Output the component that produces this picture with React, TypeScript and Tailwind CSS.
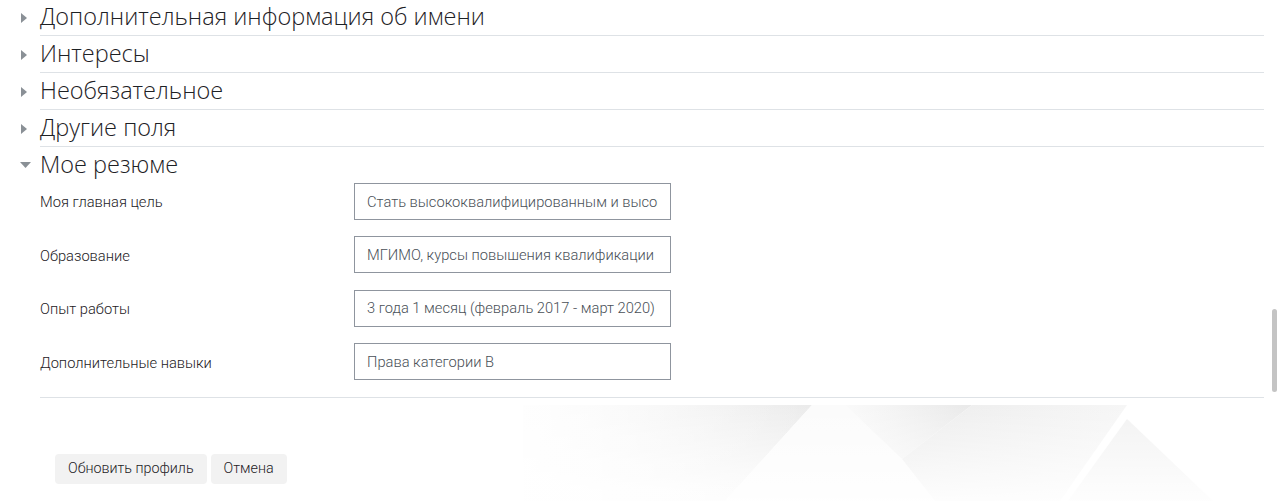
import React from 'react'

const sections = ['Дополнительная информация об имени', 'Интересы', 'Необязательное', 'Другие поля']

const fields = [
  { label: 'Моя главная цель', value: 'Стать высококвалифицированным и высокооплачиваемым специалистом' },
  { label: 'Образование', value: 'МГИМО, курсы повышения квалификации' },
  { label: 'Опыт работы', value: '3 года 1 месяц (февраль 2017 - март 2020)' },
  { label: 'Дополнительные навыки', value: 'Права категории B' },
]

const CaretRight = () => (
  <svg width="6" height="10" viewBox="0 0 6 10" className="block">
    <path d="M0 0 L6 5 L0 10 Z" fill="#8a9096" />
  </svg>
)

const CaretDown = () => (
  <svg width="11" height="6" viewBox="0 0 11 6" className="block">
    <path d="M0 0 L11 0 L5.5 6 Z" fill="#8a9096" />
  </svg>
)

// faint triangle pattern behind the bottom of the page
const Decoration = () => (
  <svg width="720" height="96" viewBox="0 0 720 96" className="block">
    <defs>
      <linearGradient id="gl" x1="0" y1="0" x2="1" y2="0">
        <stop offset="0" stopColor="#fcfcfc" />
        <stop offset="1" stopColor="#ebebeb" />
      </linearGradient>
      <linearGradient id="gv" x1="0" y1="0" x2="1" y2="0">
        <stop offset="0" stopColor="#fafafa" />
        <stop offset="1" stopColor="#e9e9e9" />
      </linearGradient>
      <linearGradient id="gb" x1="0" y1="0" x2="1" y2="0">
        <stop offset="0" stopColor="#ececec" />
        <stop offset="1" stopColor="#f6f6f6" />
      </linearGradient>
      <linearGradient id="fade" x1="0" y1="0" x2="0" y2="1">
        <stop offset="0" stopColor="#ffffff" stopOpacity="0" />
        <stop offset="1" stopColor="#ffffff" stopOpacity="0.9" />
      </linearGradient>
      <linearGradient id="fadeL" x1="0" y1="0" x2="1" y2="0">
        <stop offset="0" stopColor="#ffffff" stopOpacity="0.7" />
        <stop offset="0.4" stopColor="#ffffff" stopOpacity="0" />
      </linearGradient>
    </defs>
    <polygon points="3,0 292,0 205,96 3,96" fill="url(#gl)" />
    <polygon points="292,0 325,0 382,54 415,96 205,96" fill="#fbfbfb" />
    <polygon points="325,0 452,0 382,54" fill="url(#gv)" />
    <polygon points="452,0 607,0 540,96 415,96 382,54" fill="url(#gb)" />
    <polygon points="607,14 693,96 548,96" fill="#f2f2f2" />
    <rect x="0" y="0" width="720" height="96" fill="url(#fade)" />
    <rect x="0" y="0" width="720" height="96" fill="url(#fadeL)" />
  </svg>
)

export default function App() {
  return (
    <div className="relative h-[501px] w-[1280px] overflow-hidden bg-white font-['Open_Sans',sans-serif] text-[#1d2125]">
      <div className="absolute left-[520px] top-[405px]">
        <Decoration />
      </div>

      <div className="relative mt-[-1px] pr-[16px]">
        {sections.map((s) => (
          <div key={s} className="flex">
            <div className="flex w-[40px] items-center justify-end pr-[13px]">
              <CaretRight />
            </div>
            <div className="flex h-[37px] flex-1 items-center border-b border-[#dee2e6] text-[23.5px] font-light leading-none">
              {s}
            </div>
          </div>
        ))}

        <div className="flex">
          <div className="flex h-[36px] w-[40px] items-center justify-end pr-[9px]">
            <CaretDown />
          </div>
          <div className="flex h-[36px] flex-1 items-center text-[23.5px] font-light leading-none">Мое резюме</div>
        </div>

        <div className="ml-[40px] border-b border-[#dee2e6] font-['Roboto',sans-serif]">
          {fields.map((f) => (
            <div key={f.label} className="mb-[16.4px] flex items-center">
              <div className="w-[314px] pt-[2px] text-[14.7px] font-light">{f.label}</div>
              <input
                readOnly
                value={f.value}
                className="h-[37px] w-[317px] border border-[#8f959e] bg-white px-[12px] text-[14.7px] font-light text-[#495057] outline-none"
              />
            </div>
          ))}
        </div>

        <div className="flex gap-[4px] pl-[55px] pt-[56px] font-['Roboto',sans-serif]">
          <button className="h-[30px] rounded-[4px] bg-[#f2f2f2] px-[13px] text-[14.3px] font-light text-[#1d2125]">
            Обновить профиль
          </button>
          <button className="h-[30px] rounded-[4px] bg-[#f2f2f2] px-[13px] text-[14.3px] font-light text-[#1d2125]">
            Отмена
          </button>
        </div>
      </div>

      {/* scrollbar thumb */}
      <div className="absolute left-[1272px] top-[309px] h-[83px] w-[5px] rounded-full bg-[#c4c4c4]" />
    </div>
  )
}
